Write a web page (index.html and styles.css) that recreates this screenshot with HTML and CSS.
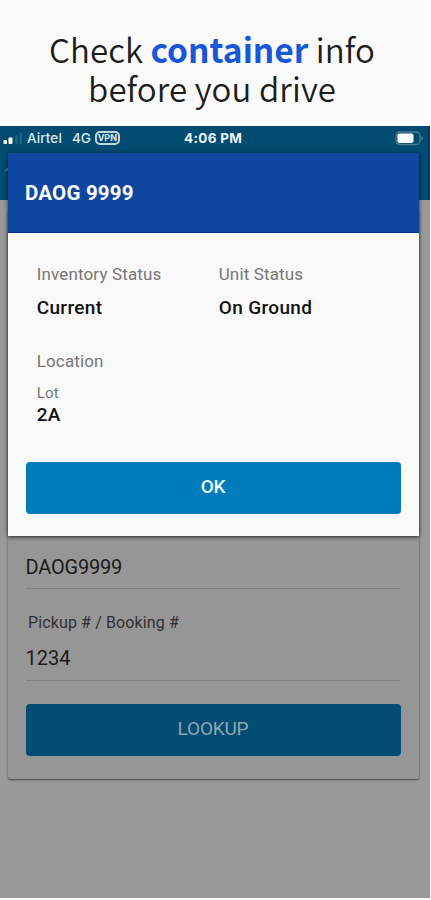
FILE: index.html
```
<!DOCTYPE html>
<html lang="en">
<head>
<meta charset="utf-8">
<meta name="viewport" content="width=device-width, initial-scale=1">
<title>Container info</title>
<link rel="stylesheet" href="styles.css">
</head>
<body>
<h1 class="headline">Check <strong>container</strong> info<br>before you drive</h1>
<main class="phone">
  <header class="topbar">
    <div class="statusbar">
      <div class="carrier">
        <svg class="signal" width="20" height="13" viewBox="0 0 20 13"><rect x="0.500" y="8" width="3.500" height="4" rx="1" fill="#fff"/><rect x="5.500" y="5.500" width="4" height="6.500" rx="1" fill="#fff"/><rect x="12" y="3" width="2.500" height="9" rx="1" fill="#1f6280"/><rect x="16.500" y="0.500" width="2.500" height="11.500" rx="1" fill="#1f6280"/></svg>
        <span class="network">Airtel</span>
        <span class="radio">4G</span>
        <span class="vpn">VPN</span>
      </div>
      <span class="time">4:06 PM</span>
      <svg class="battery" width="29" height="15" viewBox="0 0 29 15"><rect x="1" y="1" width="24" height="12.500" rx="4" fill="none" stroke="#4a7d94" stroke-width="1.300"/><rect x="2.500" y="2.500" width="16" height="9.500" rx="2" fill="#fff"/><path d="M26.300 5v4.500q1.700-.7 1.700-2.250T26.300 5z" fill="#4a7d94"/></svg>
    </div>
    <svg class="back" width="4" height="8" viewBox="0 0 4 8"><path d="M4 2L1.500 4.200H4" fill="none" stroke="#7597a8"/></svg>
  </header>
  <section class="form">
    <div class="field field-container">DAOG9999</div>
    <div class="label">Pickup # / Booking #</div>
    <div class="field field-pickup">1234</div>
    <button class="button lookup">LOOKUP</button>
  </section>
  <section class="dialog">
    <h2 class="title">DAOG 9999</h2>
    <div class="details">
      <dl class="pair"><dt>Inventory Status</dt><dd>Current</dd></dl>
      <dl class="pair"><dt>Unit Status</dt><dd>On Ground</dd></dl>
    </div>
    <div class="location">
      <div class="caption">Location</div>
      <div class="lot">Lot</div>
      <div class="value">2A</div>
    </div>
    <button class="button ok">OK</button>
  </section>
</main>
</body>
</html>
```
FILE: styles.css
```
* { box-sizing: border-box; }
body {
  margin: 0;
  width: 431px;
  height: 900px;
  overflow: hidden;
  background: #fdfdfd;
  font-family: Roboto, sans-serif;
}
.headline {
  margin: 0;
  width: 424px;
  height: 126px;
  padding-top: 30px;
  background: #fafafa;
  color: #1c1c1c;
  font: 350 33px/39px "Noto Sans CJK SC", sans-serif;
  letter-spacing: .1px;
  text-align: center;
  white-space: nowrap;
}
.headline strong { font-size: 33.500px; font-weight: 700; line-height: 1; letter-spacing: 0; color: #1758d8; }
.phone {
  position: relative;
  width: 430px;
  height: 772px;
  background: #999;
}
.topbar {
  height: 74px;
  background: #004c70;
  border-right: 2px solid #003372;
}
.statusbar {
  display: grid;
  grid-template-columns: 181px 1fr 29px;
  align-items: center;
  height: 24px;
  padding: 0 3px 0 3px;
  color: #dce9f0;
  font: 500 13.500px/20px Inter, sans-serif;
}
.carrier { display: flex; align-items: center; height: 20px; }
.network { margin-left: 4px; letter-spacing: .1px; }
.radio { margin-left: 10px; }
.vpn {
  margin-left: 4px;
  width: 25px;
  height: 14px;
  border: 2px solid #c5d6df;
  border-radius: 5px;
  font-size: 9px;
  font-weight: 700;
  line-height: 10px;
  text-align: center;
}
.time { font-weight: 700; color: #f0f8ff; letter-spacing: .3px; }
.battery { margin-left: -1px; }
.back { display: block; margin: 16px 0 0 4px; }
.form {
  margin: 9px 11px 0 8px;
  height: 570px;
  padding: 346px 19px 0 17.500px;
  background: #969696;
  border-radius: 3px;
  box-shadow: 0 1px 2px rgba(0, 0, 0, .55);
  color: #1b1b1b;
}
.field {
  border-bottom: 1px solid #828282;
  font-size: 20px;
  line-height: 24px;
}
.field-container { height: 34px; letter-spacing: -.2px; }
.label { margin: 24px 0 0 2.500px; height: 20px; color: #303030; font-size: 16px; line-height: 20px; letter-spacing: .12px; }
.field-pickup { margin-top: 13px; height: 35px; }
.button {
  display: block;
  border: 0;
  border-radius: 4px;
  height: 52px;
  padding: 0 0 2px;
  font: 500 19px/50px Roboto, sans-serif;
  text-align: center;
}
.lookup { width: 375px; margin-top: 23px; background: #004c73; color: #93a5ae; font-weight: 400; letter-spacing: -.2px; }
.dialog {
  position: absolute;
  left: 7.500px;
  top: 27px;
  width: 411.500px;
  height: 383px;
  background: #f9f9f9;
  box-shadow: 0 1px 4px rgba(0, 0, 0, .75);
}
.title {
  margin: 0;
  height: 80px;
  padding-left: 17.500px;
  background: #0f469f;
  border-bottom: 1px solid #072b91;
  color: #fff;
  font: 700 20.500px/80px Roboto, sans-serif;
  letter-spacing: .2px;
}
.details {
  display: grid;
  grid-template-columns: 182px 1fr;
  padding: 30px 0 0 29.200px;
}
.pair { margin: 0; }
dt, .caption { color: #777; font-size: 17px; line-height: 22px; letter-spacing: .15px; }
dd, .value { margin: 0; color: #111; font-size: 19px; font-weight: 500; line-height: 24px; letter-spacing: .35px; }
dd { margin-top: 11px; }
.location { padding: 30px 0 0 29.200px; }
.lot { margin-top: 11px; color: #777; font-size: 15px; line-height: 20px; letter-spacing: .2px; }
.ok { width: 375px; margin: 35px 0 0 18px; background: #007cba; color: #eaf8ff; letter-spacing: -.4px; }
```
